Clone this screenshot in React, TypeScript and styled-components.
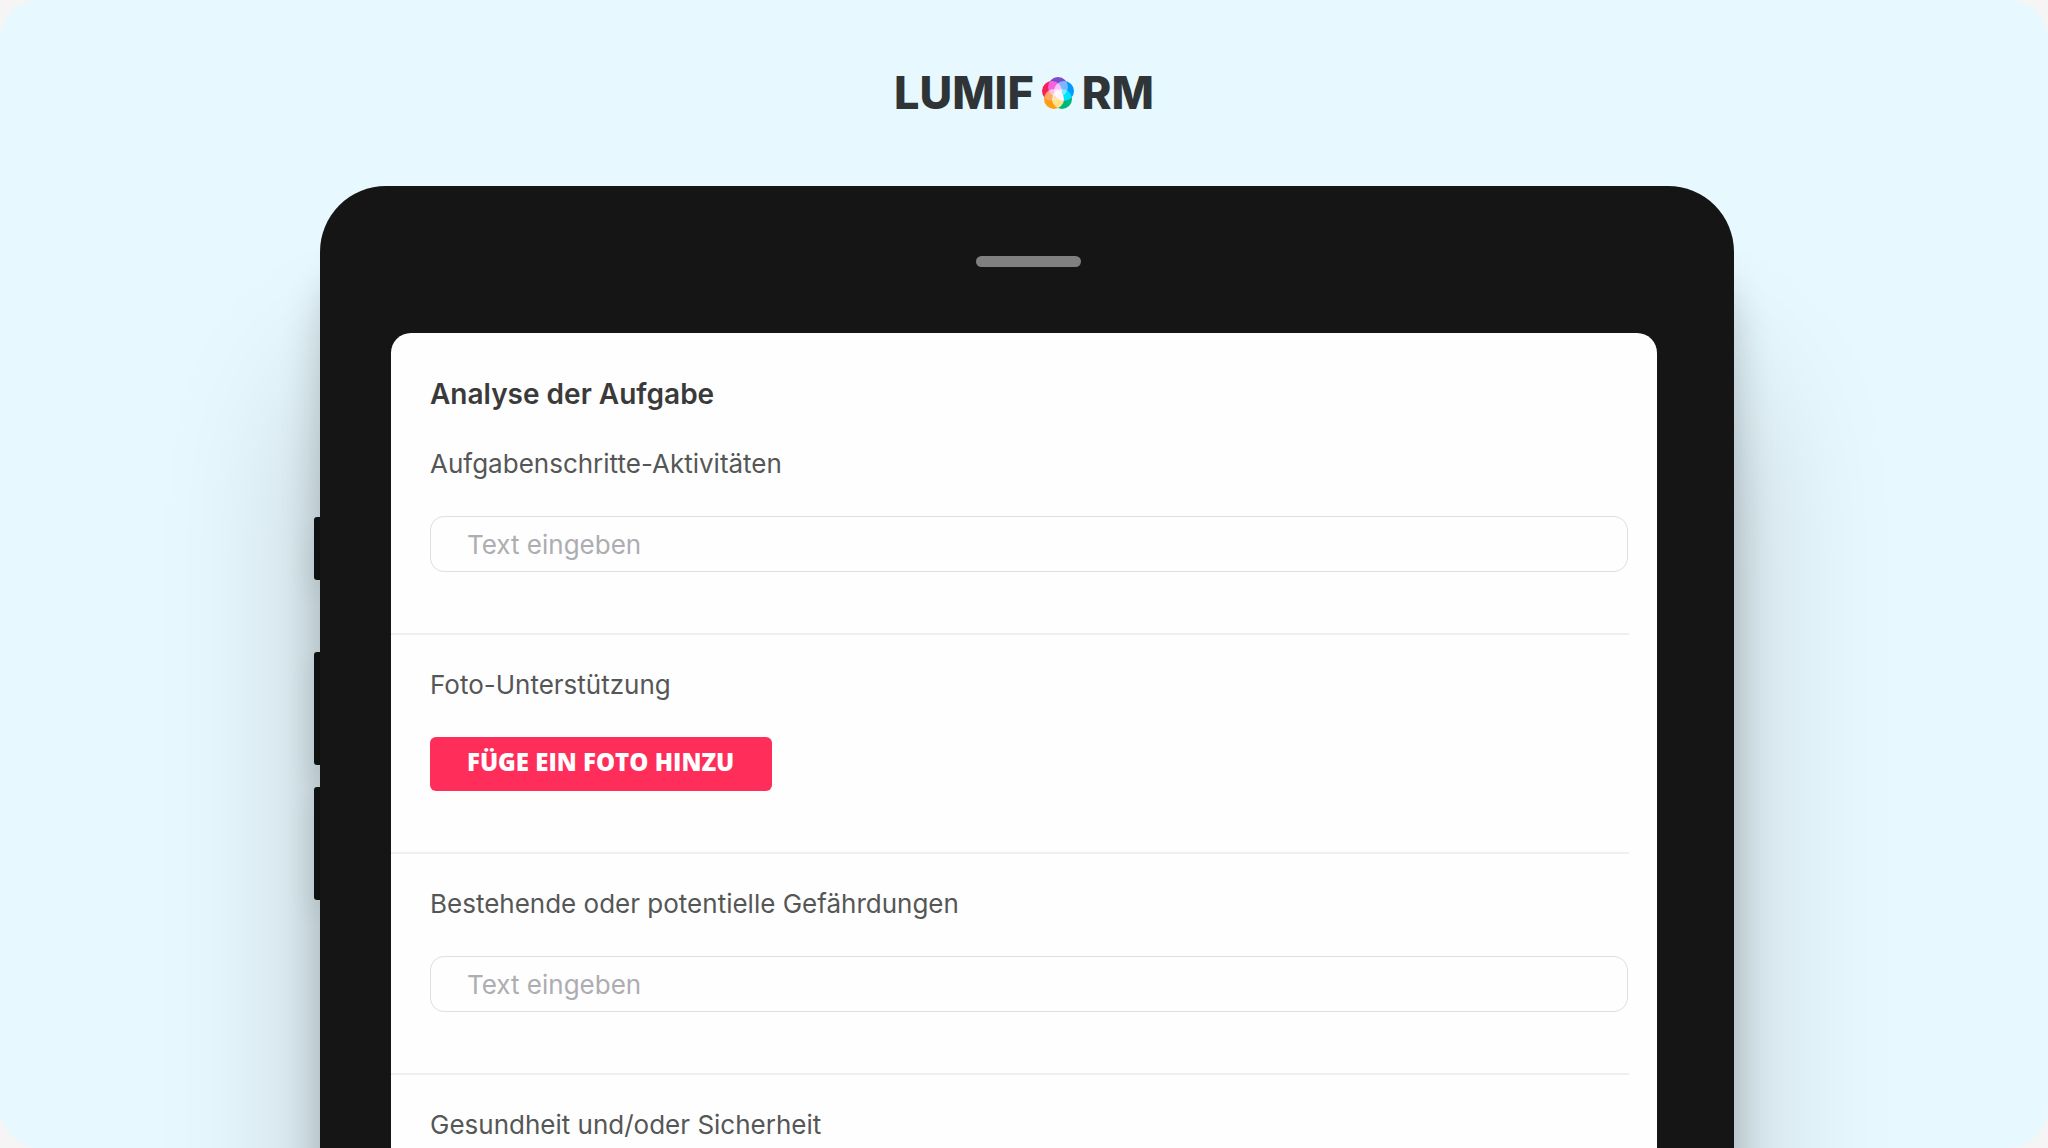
import React from "react";
import styled, { createGlobalStyle } from "styled-components";

const GlobalStyle = createGlobalStyle`
  * {
    box-sizing: border-box;
  }
  body {
    margin: 0;
    background: #f5f5f5;
    font-family: Inter, "Liberation Sans", sans-serif;
  }
`;

const Stage = styled.div`
  display: flex;
  flex-direction: column;
  align-items: center;
  height: 100vh;
  overflow: hidden;
  border-radius: 40px;
  background: #e7f8fe;
`;

const Header = styled.header`
  flex: none;
  display: flex;
  align-items: center;
  justify-content: center;
  height: 186px;
`;

const Brand = styled.h1`
  display: flex;
  align-items: center;
  gap: 8px;
  margin: 0;
  color: #2f3437;
  font: 800 45px/54px Inter, "Liberation Sans", sans-serif;
`;

const Blossom = styled.svg`
  width: 32px;
  height: 34px;
  isolation: isolate;

  circle {
    mix-blend-mode: screen;
  }
`;

const Tablet = styled.div`
  flex: 1 0 auto;
  display: flex;
  width: 100%;
  max-width: 1420px;
`;

const Keys = styled.div`
  flex: none;
  display: flex;
  flex-direction: column;
  gap: 22px;
  width: 6px;
  padding-top: 331px;
`;

const Key = styled.div<{ $short?: boolean }>`
  height: ${(p) => (p.$short ? 63 : 113)}px;
  margin-bottom: ${(p) => (p.$short ? 50 : 0)}px;
  border-radius: 3px 0 0 3px;
  background: #121515;
  box-shadow: 0 12px 24px rgba(0, 0, 0, 0.14);
`;

const Body = styled.div`
  flex: 1;
  display: flex;
  flex-direction: column;
  padding: 70px 77px 0 71px;
  border-radius: 66px 66px 0 0;
  background: #151515;
  box-shadow:
    0 80px 40px rgba(0, 0, 0, 0.2),
    0 190px 160px rgba(0, 0, 0, 0.2);
`;

const Speaker = styled.div`
  flex: none;
  align-self: center;
  width: 105px;
  height: 11px;
  margin: 0 0 66px 8px;
  border-radius: 6px;
  background: #808080;
`;

const Screen = styled.form`
  flex: 1 0 auto;
  padding: 36px 28px 0 0;
  border-radius: 20px 20px 0 0;
  background: #fefefe;
`;

const Title = styled.h2`
  margin: 0;
  padding-left: 39px;
  color: #3a3a3a;
  font-size: 28px;
  font-weight: 600;
  line-height: 50px;
`;

const Field = styled.section`
  display: flex;
  flex-direction: column;
  align-items: flex-start;
  gap: 30px;
  padding: 28px 1px 61px 39px;

  & + & {
    border-top: 2px solid #efefef;
  }

  ${Title} + & {
    padding-top: 23px;
  }
`;

const Label = styled.label`
  margin: 0;
  color: #555756;
  font-size: 26px;
  line-height: 44px;
`;

const TextInput = styled.input`
  width: 100%;
  height: 56px;
  padding: 0 36px;
  border: 1px solid #dfdfdf;
  border-radius: 14px;
  background: #fefefe;
  color: #555756;
  font: 400 26px/32px Inter, "Liberation Sans", sans-serif;
  outline: none;

  &::placeholder {
    color: #adadb2;
    opacity: 1;
  }
`;

const PhotoButton = styled.button`
  height: 54px;
  padding: 0 38px 4px 37px;
  border: 0;
  border-radius: 6px;
  background: #ff2d59;
  color: #fff;
  font: 800 24px/32px "Open Sans", "Liberation Sans", sans-serif;
`;

function Logo() {
  return (
    <Brand aria-label="LUMIFORM">
      <span>LUMIF</span>
      <Blossom viewBox="0 0 32 34" aria-hidden="true">
        <circle cx="16" cy="11" r="10" fill="#7a4cc8" />
        <circle cx="22" cy="15" r="10" fill="#0099ff" />
        <circle cx="20" cy="23" r="10" fill="#00b67c" />
        <circle cx="12" cy="23" r="10" fill="#ff9d14" />
        <circle cx="10" cy="15" r="10" fill="#f51f5c" />
      </Blossom>
      <span>RM</span>
    </Brand>
  );
}

export default function App() {
  return (
    <>
      <GlobalStyle />
      <Stage>
        <Header>
          <Logo />
        </Header>
        <Tablet>
          <Keys>
            <Key $short />
            <Key />
            <Key />
          </Keys>
          <Body>
            <Speaker />
            <Screen>
              <Title>Analyse der Aufgabe</Title>
              <Field>
                <Label htmlFor="steps">Aufgabenschritte-Aktivitäten</Label>
                <TextInput id="steps" placeholder="Text eingeben" />
              </Field>
              <Field>
                <Label as="p">Foto-Unterstützung</Label>
                <PhotoButton type="button">FÜGE EIN FOTO HINZU</PhotoButton>
              </Field>
              <Field>
                <Label htmlFor="hazards">Bestehende oder potentielle Gefährdungen</Label>
                <TextInput id="hazards" placeholder="Text eingeben" />
              </Field>
              <Field>
                <Label as="p">Gesundheit und/oder Sicherheit</Label>
              </Field>
            </Screen>
          </Body>
        </Tablet>
      </Stage>
    </>
  );
}
